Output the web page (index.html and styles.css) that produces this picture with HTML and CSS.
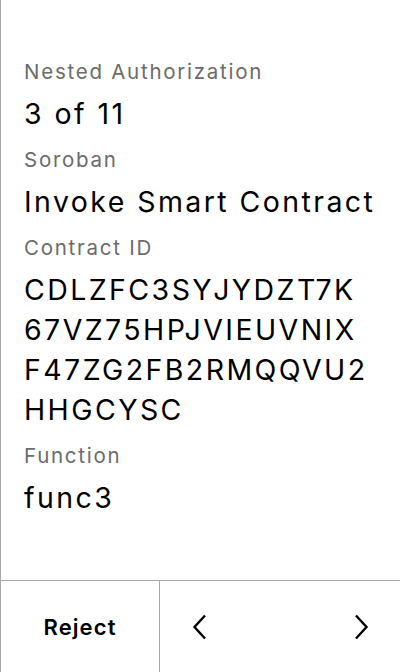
FILE: index.html
```html
<!DOCTYPE html>
<html>
<head>
<meta charset="utf-8">
<link rel="stylesheet" href="styles.css">
</head>
<body>
<div class="screen">
  <div class="content">
    <div class="label">Nested Authorization</div>
    <div class="value">3 of 11</div>
    <div class="label">Soroban</div>
    <div class="value">Invoke Smart Contract</div>
    <div class="label">Contract ID</div>
    <div class="value">CDLZFC3SYJYDZT7K<br>67VZ75HPJVIEUVNIX<br>F47ZG2FB2RMQQVU2<br>HHGCYSC</div>
    <div class="label">Function</div>
    <div class="value">func3</div>
  </div>
  <div class="footer">
    <div class="reject">Reject</div>
    <div class="nav">
      <svg class="chev" width="16" height="26" viewBox="0 0 16 26"><path d="M13 1.5 L2.5 13 L13 24.5" fill="none" stroke="#000" stroke-width="2.4"/></svg>
      <svg class="chev" width="16" height="26" viewBox="0 0 16 26"><path d="M3 1.5 L13.5 13 L3 24.5" fill="none" stroke="#000" stroke-width="2.4"/></svg>
    </div>
  </div>
</div>
</body>
</html>
```
FILE: styles.css
```css
* { box-sizing: border-box; }
html, body { margin: 0; padding: 0; background: #fff; }
body { font-family: Inter, "Noto Sans", sans-serif; color: #000; }
.screen {
  width: 400px;
  height: 672px;
  border-left: 1px solid #a8a8a8;
  display: flex;
  flex-direction: column;
}
.content {
  flex: 1;
  padding: 56px 0 0 23px;
}
.label {
  font-size: 20.5px;
  line-height: 32px;
  letter-spacing: 0.085em;
  color: #6b6b6b;
  margin-bottom: 6px;
}
.value {
  font-size: 28.5px;
  line-height: 40px;
  letter-spacing: 0.085em;
  margin-bottom: 10px;
}
.footer {
  height: 92px;
  border-top: 1px solid #a8a8a8;
  display: flex;
}
.reject {
  width: 159px;
  border-right: 1px solid #a8a8a8;
  display: flex;
  align-items: center;
  justify-content: center;
  font-size: 22px;
  font-weight: 600;
  letter-spacing: 0.05em;
}
.nav {
  flex: 1;
  display: flex;
  align-items: center;
  justify-content: space-between;
  padding: 0 31px 0 32px;
}
.chev { display: block; }
```
